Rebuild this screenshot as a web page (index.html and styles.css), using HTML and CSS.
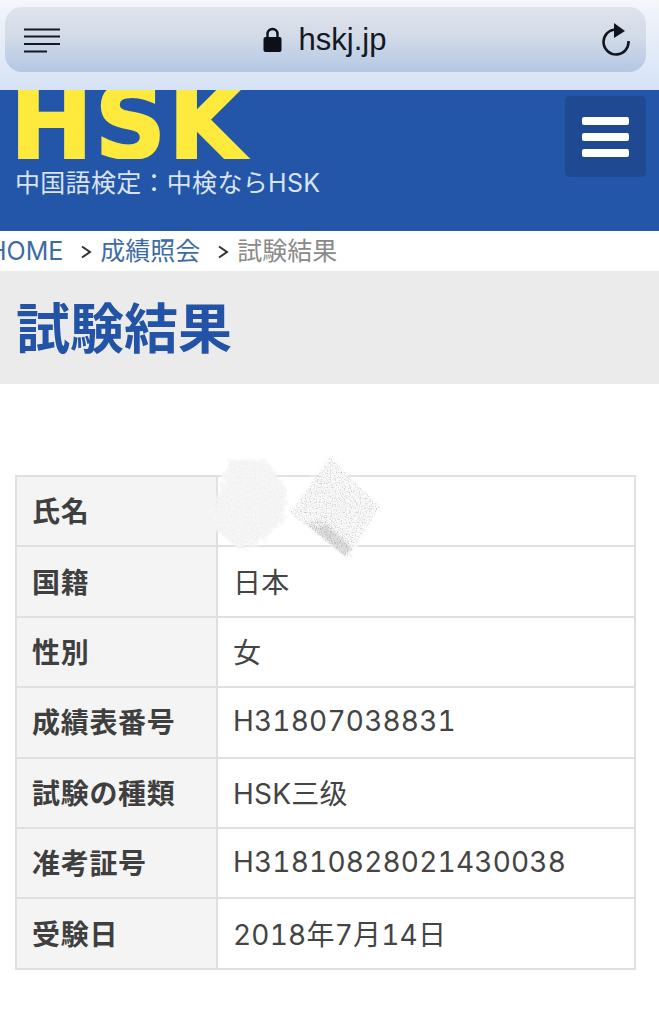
FILE: index.html
```html
<!DOCTYPE html>
<html lang="ja">
<head>
  <meta charset="UTF-8">
  <meta name="viewport" content="width=device-width, initial-scale=1.0">
  <title>試験結果</title>
  <link rel="stylesheet" href="styles.css">
</head>
<body>
  <div class="browser">
    <div class="urlbar">
      <svg class="reader" width="38" height="26" viewBox="0 0 38 26">
        <path d="M1 2.500H37M1 9.500H37M1 17H37M1 24.500H24" stroke="#141926" stroke-width="1.800" fill="none"/>
      </svg>
      <div class="address">
        <svg width="19" height="25" viewBox="0 0 19 25">
          <path d="M4.500 11V7a5 5 0 0 1 10 0v4" stroke="#0d1018" stroke-width="2.400" fill="none"/>
          <rect x="0.500" y="10" width="18" height="15" rx="2" fill="#0d1018"/>
        </svg>
        <span>hskj.jp</span>
      </div>
      <svg class="reload" width="28" height="33" viewBox="0 0 28 33">
        <path d="M13 6.500A12.500 12.500 0 1 0 26.500 18" stroke="#11141c" stroke-width="2.600" fill="none"/>
        <path d="M12 0L23 8L12 15Z" fill="#11141c"/>
      </svg>
    </div>
  </div>

  <header class="site-header">
    <div class="brand">
      <div class="logo">HSK</div>
      <div class="tagline">中国語検定：中検ならHSK</div>
    </div>
    <button class="menu-btn" type="button">
      <span></span><span></span><span></span>
    </button>
  </header>

  <nav class="crumbs">
    <a class="crumb-home">HOME</a>
    <svg class="sep" width="12" height="14" viewBox="0 0 12 14"><path d="M2 1.500L10 7L2 12.500" stroke="#333" stroke-width="2" fill="none"/></svg>
    <a>成績照会</a>
    <svg class="sep" width="12" height="14" viewBox="0 0 12 14"><path d="M2 1.500L10 7L2 12.500" stroke="#333" stroke-width="2" fill="none"/></svg>
    <span class="current">試験結果</span>
  </nav>

  <h1 class="page-title">試験結果</h1>

  <main class="result">
    <table class="result-table">
      <tr><th>氏名</th><td></td></tr>
      <tr><th>国籍</th><td>日本</td></tr>
      <tr><th>性別</th><td>女</td></tr>
      <tr><th>成績表番号</th><td>H31807038831</td></tr>
      <tr><th>試験の種類</th><td>HSK三级</td></tr>
      <tr><th>准考証号</th><td>H31810828021430038</td></tr>
      <tr><th>受験日</th><td>2018年7月14日</td></tr>
    </table>

    <!-- smudge over the name -->
    <svg class="smudge" width="190" height="115" viewBox="0 0 190 115">
      <defs>
        <filter id="rough" x="-15%" y="-15%" width="130%" height="130%">
          <feTurbulence type="fractalNoise" baseFrequency="0.22" numOctaves="3" seed="7" result="n"/>
          <feDisplacementMap in="SourceGraphic" in2="n" scale="16"/>
          <feGaussianBlur stdDeviation="0.800"/>
        </filter>
        <filter id="grain" x="-10%" y="-10%" width="120%" height="120%">
          <feTurbulence type="fractalNoise" baseFrequency="0.8" numOctaves="2" seed="4"/>
          <feColorMatrix values="0 0 0 0 0.5  0 0 0 0 0.5  0 0 0 0 0.5  2.200 0 0 0 -1.050"/>
          <feComposite in2="SourceGraphic" operator="in"/>
        </filter>
      </defs>
      <path d="M26 4L63 4L83 34L79 64L59 84L36 94L3 67Z" fill="#f6f6f6" filter="url(#rough)"/>
      <path d="M26 4L63 4L83 34L79 64L59 84L36 94L3 67Z" fill="#000" opacity=".25" filter="url(#grain)"/>
      <path d="M126 1L176 51L143 102L86 57Z" fill="#fafafa" filter="url(#rough)"/>
      <path d="M126 1L176 51L143 102L86 57Z" fill="#000" filter="url(#grain)"/>
      <path d="M100 66L143 102L146 86L122 66Z" fill="#000" filter="url(#grain)"/>
      <path d="M104 68L143 102L146 90L124 70Z" fill="#aaa" opacity=".35" filter="url(#rough)"/>
    </svg>
  </main>
</body>
</html>
```

FILE: styles.css
```css
* {
  box-sizing: border-box;
}
body {
  margin: 0;
  height: 1024px;
  overflow: hidden;
  background: #fff;
  color: #444;
  font-family: Inter, "Noto Sans CJK JP", sans-serif;
}
.browser {
  height: 90px;
  padding: 7px 13px 0 5px;
  background: linear-gradient(#f6f7fb, #f1f4fa 8px, #d6e3f5 90px);
}
.urlbar {
  height: 65px;
  display: flex;
  align-items: center;
  justify-content: space-between;
  padding: 0 16px 0 18px;
  border-radius: 17px;
  background: linear-gradient(#dfe3ec, #d5dce8 40%, #b3c8e4);
}
.address {
  display: flex;
  align-items: center;
  gap: 17px;
  margin-left: -14px;
  color: #141822;
  font-family: "Liberation Sans", sans-serif;
  font-size: 31px;
}
.site-header {
  height: 141px;
  display: flex;
  justify-content: space-between;
  padding: 6px 13px 0 15px;
  background: #2356a8;
}
.brand {
  margin-top: -6px;
}
.logo {
  height: 69px;
  overflow: hidden;
  margin-left: -5px;
  color: #fdea3c;
  -webkit-text-stroke: 2px #fdea3c;
  font-family: "DejaVu Sans", sans-serif;
  font-weight: 700;
  font-size: 99px;
  line-height: 68px;
  letter-spacing: 2px;
}
.tagline {
  margin-top: 6px;
  color: #d9e3f2;
  font-size: 25px;
  line-height: 36px;
  letter-spacing: 0.3px;
}
.menu-btn {
  width: 81px;
  height: 81px;
  display: flex;
  flex-direction: column;
  justify-content: center;
  align-items: center;
  gap: 8px;
  padding: 0;
  border: none;
  border-radius: 5px;
  background: #1f4a92;
}
.menu-btn span {
  width: 47px;
  height: 8px;
  border-radius: 2px;
  background: #fff;
}
.crumbs {
  height: 40px;
  display: flex;
  align-items: center;
  margin-left: -12px;
  font-size: 25px;
  line-height: 38px;
  white-space: nowrap;
  color: #3d6ba6;
}
.sep {
  margin: 2px 8px 0 17px;
}
.current {
  color: #8a8a8a;
}
.page-title {
  height: 113px;
  margin: 0;
  padding-left: 16px;
  background: #ebebeb;
  color: #2353a6;
  font-size: 54px;
  line-height: 117px;
  font-weight: 700;
}
.result {
  position: relative;
  padding: 91px 23px 0 15px;
}
.result-table {
  width: 621px;
  height: 493px;
  table-layout: fixed;
  border-collapse: collapse;
  font-size: 28px;
  font-variant-numeric: tabular-nums;
}
.result-table th,
.result-table td {
  height: 70.4px;
  border: 2px solid #e0e0e0;
  padding: 0 15px 2px 15px;
  text-align: left;
  letter-spacing: 0.2px;
}
.result-table th {
  width: 201px;
  background: #f4f4f4;
  color: #3f3f3f;
  font-weight: 700;
  letter-spacing: 0.7px;
}
.smudge {
  position: absolute;
  left: 204px;
  top: 72px;
}
```
